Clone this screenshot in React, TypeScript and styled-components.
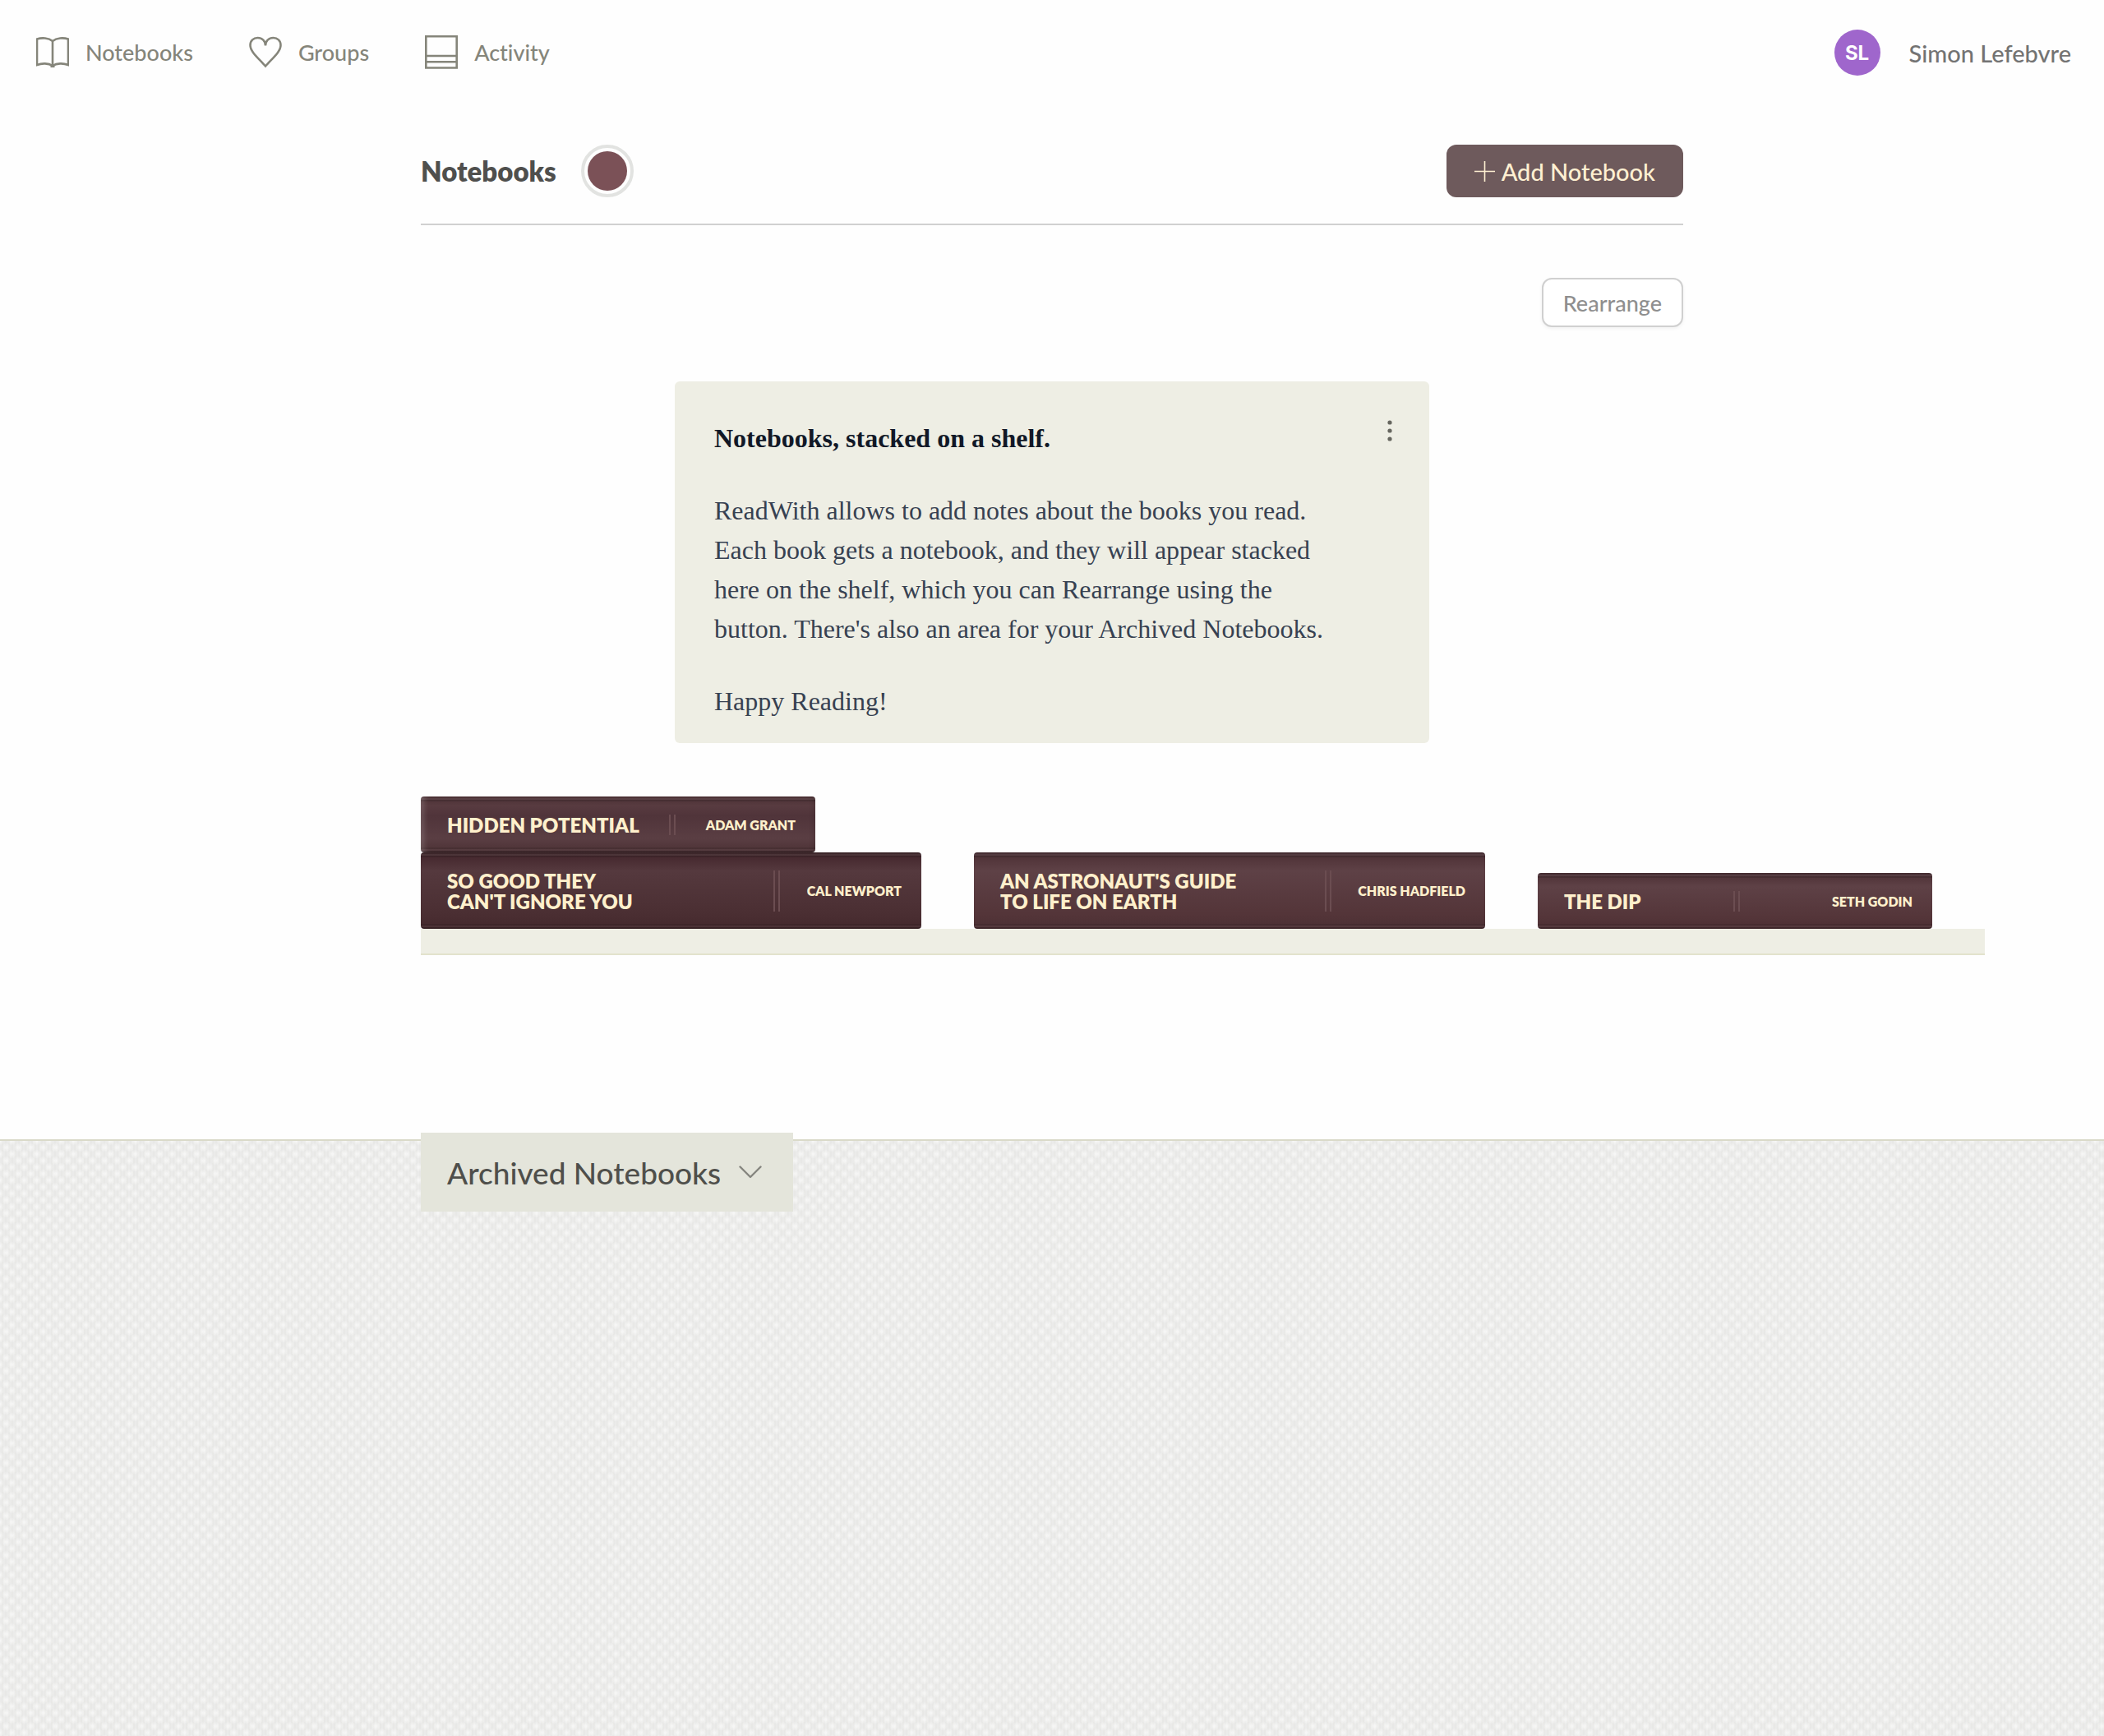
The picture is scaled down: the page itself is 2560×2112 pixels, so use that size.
import React from "react";
import styled, { createGlobalStyle, css } from "styled-components";

const GlobalStyle = createGlobalStyle`
  *, *::before, *::after { box-sizing: border-box; }
  body {
    margin: 0;
    background: #fefefe;
    font-family: Lato, "Open Sans", sans-serif;
    font-variant-ligatures: none;
    -webkit-font-smoothing: antialiased;
  }
  h1, h2, h3, p { margin: 0; }
  button { font: inherit; cursor: pointer; }
`;

const Page = styled.div`
  min-height: 100vh;
  display: flex;
  flex-direction: column;
  overflow-x: hidden;
`;

const TopBar = styled.header`
  display: flex;
  align-items: center;
  justify-content: space-between;
  height: 128px;
  padding: 0 40px 0 44px;
`;

const Nav = styled.nav`
  display: flex;
  gap: 68px;
`;

const NavLink = styled.a`
  display: flex;
  align-items: center;
  gap: 20px;
  color: #85857a;
  font-size: 27px;
  font-weight: 500;
  line-height: 42px;
  text-decoration: none;
`;

const NavIcon = styled.svg`
  width: 40px;
  height: 42px;
  fill: none;
  stroke: currentColor;
  stroke-width: 2.6;
`;

const Profile = styled.a`
  display: flex;
  align-items: center;
  gap: 35px;
  color: #737373;
  font-size: 29px;
  font-weight: 500;
  text-decoration: none;
`;

const Avatar = styled.span`
  display: grid;
  place-items: center;
  width: 56px;
  height: 56px;
  border-radius: 50%;
  background: #9f66cc;
  color: #fff;
  font-family: Inter, sans-serif;
  font-size: 24px;
  font-weight: 700;
`;

const Main = styled.main`
  width: 100%;
  max-width: 1536px;
  margin: 0 auto;
  padding: 48px 0 224px;
`;

const TitleBar = styled.div`
  display: flex;
  align-items: center;
  gap: 30px;
  padding-bottom: 32px;
  border-bottom: 2px solid #d0d0d0;
`;

const Title = styled.h1`
  color: #4f4f4d;
  font-size: 33px;
  font-weight: 800;
  line-height: 48px;
`;

const Swatch = styled.button`
  width: 64px;
  height: 64px;
  padding: 4px;
  border: 4px solid #e2e3e1;
  border-radius: 50%;
  background: #7b5157 content-box;
`;

const AddButton = styled.button`
  display: flex;
  align-items: center;
  gap: 8px;
  height: 64px;
  margin-left: auto;
  padding: 0 34px;
  border: 0;
  border-radius: 12px;
  background: #6e5a5c;
  color: #fff0d2;
  font-size: 29px;
  font-weight: 500;
`;

const PlusIcon = styled.svg`
  width: 25px;
  height: 25px;
  stroke: currentColor;
  stroke-width: 1.6;
`;

const Toolbar = styled.div`
  display: flex;
  justify-content: flex-end;
  padding: 64px 0 66px;
`;

const OutlineButton = styled.button`
  height: 60px;
  padding: 0 24px;
  border: 2px solid #d0d0d0;
  border-radius: 12px;
  background: #fff;
  box-shadow: 0 2px 4px rgba(0, 0, 0, 0.05);
  color: #8f8f8f;
  font-size: 27px;
  font-weight: 500;
`;

const NoteCard = styled.section`
  display: flex;
  align-items: flex-start;
  justify-content: space-between;
  max-width: 918px;
  margin: 0 auto 65px;
  padding: 45px 32px 27px 48px;
  border-radius: 6px;
  background: #eeeee4;
`;

const NoteText = styled.div`
  display: flex;
  flex-direction: column;
  gap: 40px;
  max-width: 750px;
  color: #374151;
  font-family: "Liberation Serif", serif;
  font-size: 32px;
  line-height: 48px;
`;

const NoteTitle = styled.h2`
  color: #111827;
  font-size: inherit;
  font-weight: 700;
`;

const MenuButton = styled.button`
  display: grid;
  place-items: center;
  width: 32px;
  height: 30px;
  padding: 0;
  border: 0;
  background: none;
  color: #66665f;
`;

const ShelfRow = styled.div`
  display: flex;
  flex-direction: column;
  width: max-content;
`;

const Stacks = styled.ul`
  display: flex;
  align-items: flex-end;
  gap: 64px;
  margin: 0;
  padding: 0 64px 0 0;
  list-style: none;
`;

const Stack = styled.li`
  display: flex;
  flex-direction: column;
  align-items: flex-start;
`;

const Plank = styled.div`
  height: 32px;
  border-bottom: 2px solid #e2e2cc;
  background: #eeeee4;
`;

type Tone = "worn" | "dark" | "plain";

const bands = css`
  linear-gradient(
    transparent 2px,
    rgba(255, 255, 255, 0.06) 2px 4px,
    rgba(0, 0, 0, 0.12) 4px 6px,
    transparent 6px calc(100% - 6px),
    rgba(0, 0, 0, 0.1) calc(100% - 6px) calc(100% - 4px),
    rgba(255, 255, 255, 0.04) calc(100% - 4px) calc(100% - 2px),
    rgba(0, 0, 0, 0.2) calc(100% - 2px)
  )
`;

const tones = {
  worn: css`
    background: ${bands},
      linear-gradient(#4a3034, #583b40 16%, #50343a 35%, #5a3e43 75%, #4f3438 94%, #4a3034);
    box-shadow: inset 9px 0 6px -5px rgba(255, 255, 255, 0.16), inset -7px 0 6px -5px rgba(0, 0, 0, 0.12);
  `,
  dark: css`
    background: ${bands}, linear-gradient(#3a2629, #46292f 6%, #55393e 24%, #4a2e32 82%, #44292d);
  `,
  plain: css`
    background: ${bands}, linear-gradient(#432c31, #52353a 8%, #5e4146 24%, #543539 80%, #4c3034);
  `,
};

const Spine = styled.a<{ $width: number; $tone: Tone }>`
  display: flex;
  align-items: center;
  justify-content: space-between;
  gap: 32px;
  width: ${(p) => p.$width}px;
  padding: 22px 24px 21px 32px;
  border-radius: 4px;
  color: #fff0cc;
  font-weight: 800;
  text-decoration: none;
  text-transform: uppercase;
  ${(p) => tones[p.$tone]}
`;

const SpineTitle = styled.span`
  flex: 0 1 auto;
  max-width: 365px;
  font-size: 24px;
  line-height: 25px;
  text-wrap: balance;
`;

const SpineRule = styled.span`
  align-self: stretch;
  flex: none;
  width: 8px;
  border: solid #6b4d51;
  border-width: 0 2px;
`;

const SpineAuthor = styled.span`
  flex: none;
  font-size: 16px;
  line-height: 24px;
`;

const Archive = styled.section`
  flex: 1;
  border-top: 2px solid #dadac9;
  background-color: #e8e8e6;
  background-image:
    repeating-linear-gradient(90deg, rgba(255, 255, 255, 0.14) 0 2px, transparent 2px 4px),
    radial-gradient(ellipse at center, #f4f4f3 10%, rgba(244, 244, 243, 0) 50%),
    radial-gradient(ellipse at center, #f4f4f3 10%, rgba(244, 244, 243, 0) 50%);
  background-size: 4px 4px, 15px 16px, 15px 16px;
  background-position: 0 0, 0 0, 7px 8px;
`;

const ArchiveInner = styled.div`
  max-width: 1536px;
  margin: 0 auto;
`;

const ArchiveToggle = styled.button`
  display: flex;
  align-items: center;
  gap: 22px;
  height: 96px;
  margin-top: -10px;
  padding: 0 38px 0 32px;
  border: 0;
  background: #e4e5db;
  color: #4f4f4b;
  font-size: 37px;
  font-weight: 500;
`;

const Chevron = styled.svg`
  width: 28px;
  height: 16px;
  fill: none;
  stroke: #85857f;
  stroke-width: 2.4;
  stroke-linecap: round;
  stroke-linejoin: round;
`;

interface Book {
  title: string;
  author: string;
  width: number;
  tone: Tone;
}

const stacks: Book[][] = [
  [
    { title: "Hidden Potential", author: "Adam Grant", width: 480, tone: "worn" },
    { title: "So Good They Can't Ignore You", author: "Cal Newport", width: 609, tone: "dark" },
  ],
  [{ title: "An Astronaut's Guide to Life on Earth", author: "Chris Hadfield", width: 622, tone: "plain" }],
  [{ title: "The Dip", author: "Seth Godin", width: 480, tone: "plain" }],
];

export default function App() {
  return (
    <>
      <GlobalStyle />
      <Page>
        <TopBar>
          <Nav>
            <NavLink href="#notebooks">
              <NavIcon viewBox="0 0 40 42" aria-hidden="true">
                <path d="M20 7C15 3 7 2.6 1 4.6V36C7 33.6 15 33.8 20 37C25 33.8 33 33.6 39 36V4.6C33 2.6 25 3 20 7V39" />
                <path d="M17.500 37.800H22.500" />
              </NavIcon>
              Notebooks
            </NavLink>
            <NavLink href="#groups">
              <NavIcon viewBox="0 0 40 42" aria-hidden="true">
                <path d="M20 37.500C13 29 1.500 20.500 1.500 12C1.500 6.500 5.500 3 10.500 3C16 3 20 7 20 12.500C20 7 24 3 29.500 3C34.500 3 38.500 6.500 38.500 12C38.500 20.500 27 29 20 37.500Z" />
              </NavIcon>
              Groups
            </NavLink>
            <NavLink href="#activity">
              <NavIcon viewBox="0 0 40 42" aria-hidden="true">
                <path d="M1.300 1.300H38.700V39.500H1.300ZM1.300 25H38.700M1.300 32.300H38.700" />
              </NavIcon>
              Activity
            </NavLink>
          </Nav>
          <Profile href="#profile">
            <Avatar>SL</Avatar>
            Simon Lefebvre
          </Profile>
        </TopBar>

        <Main>
          <TitleBar>
            <Title>Notebooks</Title>
            <Swatch aria-label="Shelf colour" />
            <AddButton>
              <PlusIcon viewBox="0 0 25 25" aria-hidden="true">
                <path d="M12.500 0V25M0 12.500H25" />
              </PlusIcon>
              Add Notebook
            </AddButton>
          </TitleBar>

          <Toolbar>
            <OutlineButton>Rearrange</OutlineButton>
          </Toolbar>

          <NoteCard>
            <NoteText>
              <NoteTitle>Notebooks, stacked on a shelf.</NoteTitle>
              <p>
                ReadWith allows to add notes about the books you read. Each book gets a notebook, and they will
                appear stacked here on the shelf, which you can Rearrange using the button. There's also an area
                for your Archived Notebooks.
              </p>
              <p>Happy Reading!</p>
            </NoteText>
            <MenuButton aria-label="Note options">
              <svg width="6" height="26" viewBox="0 0 6 26" fill="currentColor" aria-hidden="true">
                <circle cx="3" cy="3" r="2.600" />
                <circle cx="3" cy="13" r="2.600" />
                <circle cx="3" cy="23" r="2.600" />
              </svg>
            </MenuButton>
          </NoteCard>

          <ShelfRow>
            <Stacks>
              {stacks.map((books) => (
                <Stack key={books[0].title}>
                  {books.map((book) => (
                    <Spine key={book.title} href="#notebook" $width={book.width} $tone={book.tone}>
                      <SpineTitle>{book.title}</SpineTitle>
                      <SpineRule />
                      <SpineAuthor>{book.author}</SpineAuthor>
                    </Spine>
                  ))}
                </Stack>
              ))}
            </Stacks>
            <Plank />
          </ShelfRow>
        </Main>

        <Archive>
          <ArchiveInner>
            <ArchiveToggle aria-expanded="false">
              Archived Notebooks
              <Chevron viewBox="0 0 28 16" aria-hidden="true">
                <path d="M1.500 1.500L14 14L26.500 1.500" />
              </Chevron>
            </ArchiveToggle>
          </ArchiveInner>
        </Archive>
      </Page>
    </>
  );
}
